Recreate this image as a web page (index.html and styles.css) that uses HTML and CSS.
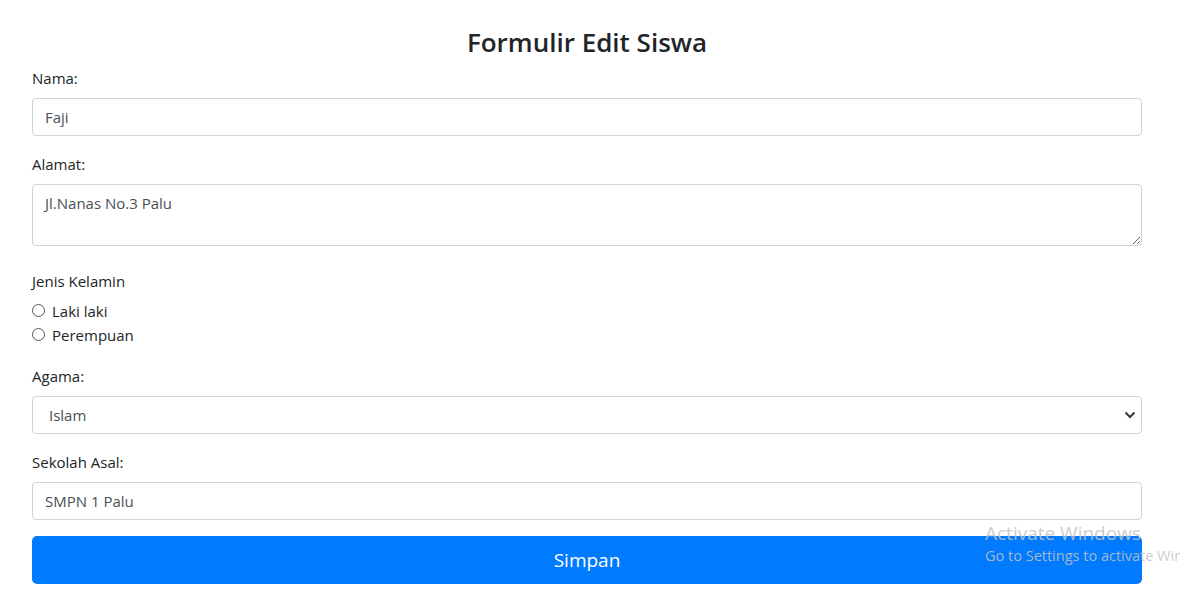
FILE: index.html
```html
<!DOCTYPE html>
<html lang="id">
<head>
<meta charset="utf-8">
<title>Formulir Edit Siswa</title>
<link rel="stylesheet" href="styles.css">
</head>
<body>
<main class="container">
  <h3 class="title">Formulir Edit Siswa</h3>
  <form class="form">
    <div class="group">
      <label class="label" for="nama">Nama:</label>
      <input class="control" id="nama" type="text" value="Faji">
    </div>
    <div class="group">
      <label class="label" for="alamat">Alamat:</label>
      <textarea class="control area" id="alamat" rows="2">Jl.Nanas No.3 Palu</textarea>
    </div>
    <div class="group group-radio">
      <div class="label">Jenis Kelamin</div>
      <label class="radio"><input type="radio" name="jk" value="L"><span>Laki laki</span></label>
      <label class="radio"><input type="radio" name="jk" value="P"><span>Perempuan</span></label>
    </div>
    <div class="group">
      <label class="label" for="agama">Agama:</label>
      <div class="select-wrap">
        <select class="control select" id="agama">
          <option>Islam</option>
          <option>Kristen</option>
          <option>Hindu</option>
          <option>Budha</option>
        </select>
        <svg class="chev" width="12" height="8" viewBox="0 0 12 8"><path d="M1.5 1.5 6 6l4.5-4.5" fill="none" stroke="#343a40" stroke-width="2"/></svg>
      </div>
    </div>
    <div class="group">
      <label class="label" for="sekolah">Sekolah Asal:</label>
      <input class="control" id="sekolah" type="text" value="SMPN 1 Palu">
    </div>
    <button class="btn" type="submit">Simpan</button>
  </form>
</main>
<div class="watermark">
  <div class="wm-title">Activate Windows</div>
  <div class="wm-sub">Go to Settings to activate Windows.</div>
</div>
</body>
</html>
```
FILE: styles.css
```css
* { box-sizing: border-box; }
html, body { margin: 0; padding: 0; overflow: hidden; }
body {
  font-family: "Open Sans", "Noto Sans", sans-serif;
  font-size: 15px;
  line-height: 24px;
  color: #212529;
  background: #fff;
  width: 1180px;
  height: 591px;
}
.container {
  width: 1110px;
  margin-left: 32px;
  padding-top: 25px;
}
.title {
  margin: 0 0 7px;
  text-align: center;
  font-size: 26px;
  font-weight: 600;
  line-height: 34px;
  color: #212529;
}
.group { margin-bottom: 16px; }
.group-radio { margin-top: 23px; margin-bottom: 17px; }
.label {
  display: block;
  margin-bottom: 8px;
}
.group-radio .label { margin-bottom: 6px; }
.control {
  display: block;
  width: 100%;
  height: 38px;
  padding: 6px 12px;
  font-family: inherit;
  font-size: 15px;
  line-height: 24px;
  color: #495057;
  background: #fff;
  border: 1px solid #ced4da;
  border-radius: 4px;
  outline: none;
}
.area { height: 62px; resize: vertical; }
.select-wrap { position: relative; }
.select {
  appearance: none;
  -webkit-appearance: none;
  padding-left: 16px;
}
.chev { position: absolute; right: 6px; top: 15px; pointer-events: none; }
.radio {
  display: flex;
  align-items: center;
  height: 24px;
  gap: 7px;
}
.radio input {
  margin: 0;
  width: 13px;
  height: 13px;
  appearance: none;
  -webkit-appearance: none;
  border: 1px solid #555;
  border-radius: 50%;
  background: #fff;
  position: relative;
  top: -1px;
}
.btn {
  display: block;
  width: 100%;
  height: 48px;
  border: 0;
  border-radius: 5px;
  background: #007bff;
  color: #fff;
  font-family: inherit;
  font-size: 19px;
  line-height: 28px;
}
.watermark {
  position: absolute;
  left: 985px;
  top: 521px;
  color: rgba(195, 195, 195, 0.85);
  white-space: nowrap;
  pointer-events: none;
  font-family: "Open Sans", "Noto Sans", sans-serif;
}
.wm-title { font-size: 19px; line-height: 24px; }
.wm-sub { font-size: 14.5px; line-height: 22px; }
```
